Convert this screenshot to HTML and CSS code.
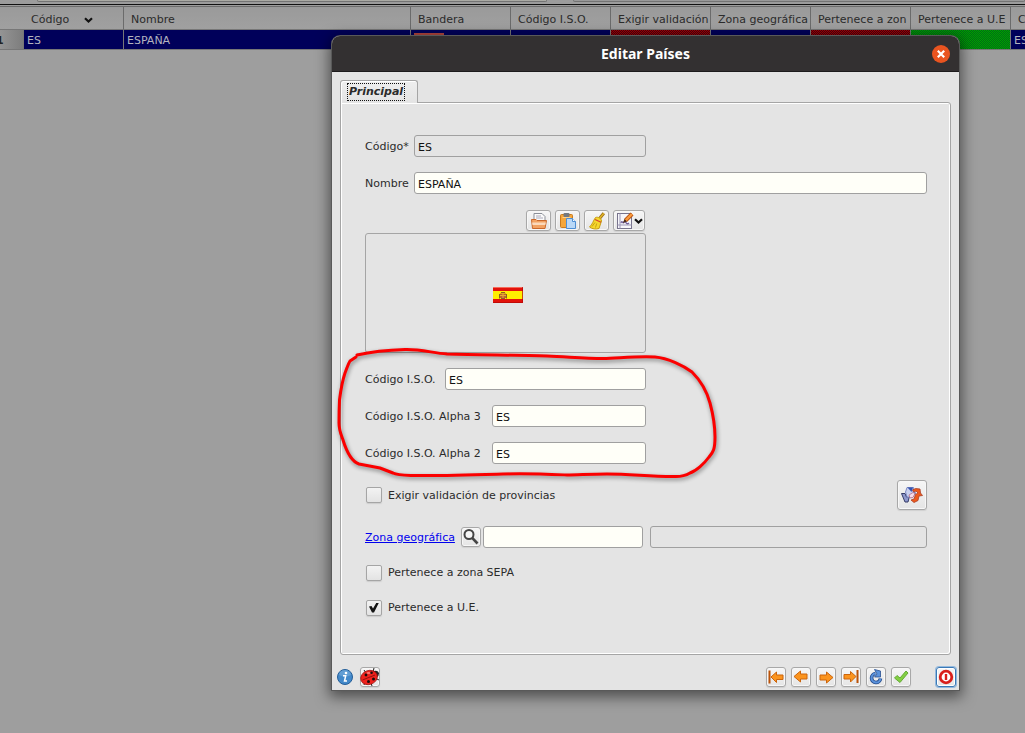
FILE: index.html
```html
<!DOCTYPE html>
<html lang="es">
<head>
<meta charset="utf-8">
<title>Editar Países</title>
<link rel="stylesheet" href="styles.css">
</head>
<body>
<main class="desktop">
  <div class="toolstrip"><span class="strip-box strip-main"></span><span class="strip-box strip-rest"></span></div>
  <table class="grid">
    <colgroup><col class="col-num"><col class="col-std"><col class="col-name"><col class="col-std"><col class="col-std"><col class="col-std"><col class="col-std"><col class="col-std"><col class="col-std"><col class="col-std"></colgroup>
    <thead>
      <tr><th></th><th>Código <svg class="sort" viewBox="0 0 9 6"><path d="M1 1.2 4.500 4.500 8 1.200" fill="none" stroke="#111" stroke-width="2.200"/></svg></th><th>Nombre</th><th>Bandera</th><th>Código I.S.O.</th><th>Exigir validación</th><th>Zona geográfica</th><th>Pertenece a zon</th><th>Pertenece a U.E</th><th>C</th></tr>
    </thead>
    <tbody>
      <tr><td class="num">1</td><td>ES</td><td>ESPAÑA</td><td><span class="mini-flag"></span></td><td></td><td class="no"></td><td></td><td class="no"></td><td class="yes"></td><td>ES</td></tr>
    </tbody>
  </table>
</main>

<section class="dialog" role="dialog" aria-labelledby="title">
  <header class="titlebar">
    <h1 id="title">Editar Países</h1>
    <button class="close" aria-label="Cerrar"><svg viewBox="0 0 18 18"><path d="M5.800 5.800 12.200 12.200M12.200 5.800 5.800 12.200" stroke="#fff" stroke-width="2.200"/></svg></button>
  </header>
  <div class="body">
    <div class="tabs" role="tablist"><button class="tab" role="tab" aria-selected="true"><span>Principal</span></button></div>
    <form class="panel">
      <div class="row half"><label class="label-short" for="codigo">Código*</label><input id="codigo" class="field ro" value="ES" readonly></div>
      <div class="row"><label class="label-short" for="nombre">Nombre</label><input id="nombre" class="field" value="ESPAÑA"></div>
      <div class="picture half">
        <div class="picture-tools">
          <button type="button" class="btn" aria-label="Abrir"><svg viewBox="0 0 18 18"><path d="M4 1.500h8l3 3V10H4z" fill="#fafafa" stroke="#8b8f98"/><path d="M6 4h5M6 6h7" stroke="#aab"/><path d="M1.500 7.500H6l1 1h9.500l-1.500 8H2.500z" fill="#f2a263" stroke="#c9682c"/><path d="M2 10.500h14l-.8 2.500H2.500z" fill="#fbd9bb"/></svg></button>
          <button type="button" class="btn" aria-label="Pegar"><svg viewBox="0 0 18 18"><rect x="1.500" y="2.500" width="12" height="13" rx="1" fill="#f5a63a" stroke="#c97b1f"/><rect x="4.500" y="1" width="6" height="4" rx="1" fill="#74797f"/><path d="M3.500 5.500h8" stroke="#ffd28c"/><path d="M7.500 6.500h6l3 3v7h-9z" fill="#b9d8f7" stroke="#4d8ed4"/><path d="M13.500 6.500v3h3" fill="#fff" stroke="#4d8ed4"/></svg></button>
          <button type="button" class="btn" aria-label="Limpiar"><svg viewBox="0 0 18 18"><path d="M15.800 1.200 11.500 6.500" stroke="#9a6c12" stroke-width="3"/><path d="M15.800 1.200 11.500 6.500" stroke="#e0b52a" stroke-width="1.400"/><path d="M7.500 5.500c2.500-1 6 1 6 3.500L11 16.500c-3 1-7 .5-9.500-1.500C4.500 12.500 5 9 7.500 5.500z" fill="#f5d72c" stroke="#c79d12"/><path d="M7 7.500l6 2.800" stroke="#d5402e" stroke-width="1.200"/><path d="M4 14.500 7 10.500M7.500 15.500l1.200-4" stroke="#c9a214"/></svg></button>
          <button type="button" class="btn wide" aria-label="Editar imagen"><svg viewBox="0 0 18 18"><rect x="1.500" y="1.500" width="14" height="15" fill="#f6f6fa" stroke="#77738c"/><path d="M4 1.500v15M1.500 13h14" stroke="#9b96b5"/><path d="M5 11c1-4 2 2 3-1s2 4 5 1" fill="none" stroke="#72619d" stroke-width="1.300"/><path d="M16 2 9.500 8.500" stroke="#b95412" stroke-width="4.200"/><path d="M16 2 9.500 8.500" stroke="#fa9a3c" stroke-width="2.400"/><path d="M8.500 7l2.500 2.500-4 1.500z" fill="#4a2c18"/></svg><svg class="sort" viewBox="0 0 9 6"><path d="M1 1.200 4.500 4.500 8 1.200" fill="none" stroke="#111" stroke-width="2.200"/></svg></button>
        </div>
        <div class="picture-box">
          <svg class="flag" viewBox="0 0 30 16" role="img" aria-label="Bandera de España"><path fill="#e3120b" d="M0 0h30v16H0z"/><path fill="#ffee00" d="M0 4h30v8H0z"/><path d="M0 .5h30" stroke="#f46a5a"/><path d="M0 15.500h30M29.500 0v16" stroke="#b40806" opacity=".7"/><path d="M7 6.500h6v4.500H7z" fill="#bd642d"/><path d="M8 5.500h4M6.500 7v4.500M13.500 7v4.500" stroke="#8c621f"/><path d="M10 6v5M7 8.500h6" stroke="#e6ac35"/><path d="M8 11.500h4" stroke="#8d5b35"/></svg>
        </div>
      </div>
      <div class="row half"><label class="label-mid" for="iso">Código I.S.O.</label><input id="iso" class="field" value="ES"></div>
      <div class="row half"><label class="label-long" for="iso3">Código I.S.O. Alpha 3</label><input id="iso3" class="field" value="ES"></div>
      <div class="row half"><label class="label-long" for="iso2">Código I.S.O. Alpha 2</label><input id="iso2" class="field" value="ES"></div>
      <div class="row spread">
        <div class="check"><input type="checkbox" id="prov"><label for="prov">Exigir validación de provincias</label></div>
        <button type="button" class="btn large" aria-label="Sincronizar"><svg viewBox="0 0 22 18"><path d="M.5 7.500H4l1.500 3.500 3-1-1.500 6H4z" fill="#8d97cd" stroke="#353c67"/><path d="M6 1.500h6.500L12 6l3 1-4 4.500L6 11 4.500 6z" fill="#c9d0f0" stroke="#6474b8" stroke-width=".8"/><path d="M6.500 1.500H12L10.500 6z" fill="#3553ae"/><path d="M11.500 4l3-1.500 4.500.500.500 4 2 2.500-3.500.5-1 4.500-4 2-3-2.500 3-1 1.500-4.500 2.500-1.500-2-2-2 1z" fill="#ed5a1c" stroke="#a93c25" stroke-width=".8"/><path d="M8 9l4-2.500 2 1-2 4-3 .5z" fill="#f6ddeb" stroke="#a54b62" stroke-width=".6"/></svg></button>
      </div>
      <div class="row zone">
        <a class="label-zone" href="#zona" id="zona-label">Zona geográfica</a>
        <button type="button" class="btn square" aria-label="Buscar"><svg viewBox="0 0 18 18"><circle cx="7" cy="6.500" r="4.500" fill="#f6f6f6" stroke="#454545" stroke-width="2"/><path d="M10.200 9.800 15.500 15.500" stroke="#454545" stroke-width="2.600"/></svg></button>
        <input class="field zone-code" aria-labelledby="zona-label"><input class="field ro zone-name" aria-label="Descripción de zona" readonly>
      </div>
      <div class="check sepa"><input type="checkbox" id="sepa"><label for="sepa">Pertenece a zona SEPA</label></div>
      <div class="check"><input type="checkbox" id="ue" checked><label for="ue">Pertenece a U.E.</label></div>
    </form>
    <footer class="actions">
      <button class="info" aria-label="Información"><svg viewBox="0 0 18 18"><circle cx="9" cy="9" r="7.500" fill="#4389ca" stroke="#245e98"/><path d="M3 7a6 5 0 0 1 12 0q-6 3-12 0" fill="#78acdb" opacity=".6"/><circle cx="10" cy="5" r="1.300" fill="#fff"/><path d="M7 7.800h2.700L8.500 13H11" fill="none" stroke="#fff" stroke-width="1.500"/></svg></button>
      <button class="btn square bug" aria-label="Depurar"><svg viewBox="0 0 20 20"><path d="M4 3l2 3M14 1l-1 4M19 6l-3 2M19 13l-4-2M12 19l-1-3M4 18l1-3" stroke="#222"/><circle cx="15.500" cy="7" r="3.300" fill="#252525"/><ellipse cx="9" cy="10.500" rx="8.500" ry="7" transform="rotate(-20 9 10.500)" fill="#ee221d" stroke="#9c1110" stroke-width=".7"/><path d="M2.500 13 15 8" stroke="#7a0d0b" stroke-width=".8"/><g fill="#1c0d0d"><circle cx="6" cy="8" r="1.400"/><circle cx="11.500" cy="5.800" r="1.300"/><circle cx="8.500" cy="14.500" r="1.500"/><circle cx="13.500" cy="12" r="1.500"/></g><ellipse cx="8.500" cy="6" rx="2" ry="1" fill="#ff9c95" opacity=".7"/></svg></button>
      <span class="grow"></span>
      <button class="btn square" aria-label="Primero"><svg viewBox="0 0 18 18"><path d="M2.500 2.500v13" stroke="#bb5208" stroke-width="2"/><path d="M4 9l5.500-5v3H16v4.500H9.500v3z" fill="#fb941e" stroke="#cc650c"/></svg></button>
      <button class="btn square" aria-label="Anterior"><svg viewBox="0 0 18 18"><path d="M2 8.500 8.500 3v3H15v5H8.500v3z" fill="#fb941e" stroke="#cc650c"/></svg></button>
      <button class="btn square" aria-label="Siguiente"><svg viewBox="0 0 18 18"><path d="M16 9.500 9.500 4v3H3v5h6.500v3z" fill="#fb941e" stroke="#cc650c"/></svg></button>
      <button class="btn square" aria-label="Último"><svg viewBox="0 0 18 18"><path d="M15.500 2v13" stroke="#bb5208" stroke-width="2"/><path d="M14 8.500 8.500 3.500v3H2V11h6.500v3z" fill="#fb941e" stroke="#cc650c"/></svg></button>
      <button class="btn square" aria-label="Actualizar"><svg viewBox="0 0 18 18"><path d="M8.500 5.500a4.500 4.500 0 1 0 5 5" fill="none" stroke="#284f8f" stroke-width="3.600"/><path d="M8.500 5.500a4.500 4.500 0 1 0 5 5" fill="none" stroke="#5a92dc" stroke-width="2"/><path d="M7.500 1.500 13.500 3v6H7.500l2.500-3z" fill="#5a92dc" stroke="#284f8f" stroke-width=".8"/></svg></button>
      <button class="btn square" aria-label="Aceptar"><svg viewBox="0 0 18 18"><path d="M2.500 10 5 7.500l3 2.500 6-7 2 2-8 9.500z" fill="#83cf43" stroke="#64ab35"/></svg></button>
      <button class="btn square quit" aria-label="Cancelar"><svg viewBox="0 0 18 18"><circle cx="9" cy="9" r="5.800" fill="#fff" stroke="#d91f1c" stroke-width="2.800"/><path d="M9 6v6" stroke="#d91f1c" stroke-width="2.400"/></svg></button>
    </footer>
  </div>
  <svg class="annotation" viewBox="336 344 384 138" aria-hidden="true"><path d="M357 355C370 352 388 350 405 349.500C420 349 433 353 447 354C480 355 520 355 547 356C570 357 585 358.500 603 358.500C620 358 638 356 655 357C668 358 684 366 692 372C702 382 707 392 710 403C714 418 715 428 715 437C715 450 713 452 709 457C704 464 696 471 690 473C685 476 680 477 673 476.500C645 476 630 474 607 474C590 474 578 475 567 475C545 474 525 473 503 474C470 475 440 476 413 475.500C400 475 397 475 393 473L380 468L359 464C353 462 347 453 343 440C340 432 339 430 339 423C339 412 339 410 339.500 400C341 388 342 382 345 373C347 368 348 364 350 361L356 357" fill="none" stroke="#fb0000" stroke-width="3" stroke-linecap="round" stroke-linejoin="round"/></svg>
</section>
</body>
</html>
```

FILE: styles.css
```css
* { box-sizing: border-box; }
body {
  margin: 0;
  min-height: 100vh;
  overflow: hidden;
  background: #9e9e9e;
  color: #2b2b2b;
  font: 11px/16px "DejaVu Sans", sans-serif;
}
button, input { font: inherit; color: inherit; margin: 0; }
button { padding: 0; border: 0; background: none; }
svg { display: block; flex: none; }

.desktop { overflow: hidden; min-height: 100vh; }
.toolstrip {
  display: flex;
  gap: 26px;
  height: 7px;
  padding-left: 37px;
  background: linear-gradient(#9c9c9c 4px, #111 4px, #111 5px, #9c9c9c 5px, #9c9c9c 6px, #6c6c6c 6px);
}
.strip-box { height: 2px; border: solid #737373; border-width: 0 1px 1px; border-radius: 0 0 3px 3px; background: #aaaaa4; }
.strip-main { flex: 0 0 510px; }
.strip-rest { flex: 1; background: #999; }

.grid { width: 1111px; table-layout: fixed; border-collapse: separate; border-spacing: 0; }
.col-num { width: 24px; }
.col-std { width: 100px; }
.col-name { width: 287px; }
.grid th, .grid td { overflow: hidden; white-space: nowrap; text-align: left; }
.grid th {
  height: 23px;
  padding: 3px 0 0 7px;
  font-weight: 400;
  border-right: 1px solid #6b6b6b;
  border-bottom: 1px solid #777;
  background: linear-gradient(#9a9a9a, #a0a0a0);
}
.grid th:first-child { border-right: 0; }
.grid th .sort { display: inline-block; margin-left: 11px; }
.grid td {
  height: 20px;
  padding: 2px 0 0 3px;
  color: #b4b4bf;
  background: #00005a;
  border-right: 1px solid #777;
  border-bottom: 1px solid #777;
}
.grid .num { color: #222; font-weight: 700; padding-left: 0; text-indent: -4px; background: linear-gradient(90deg, #949494, #7d7d7d); }
.grid .no { background: repeating-conic-gradient(#a50000 0 25%, #4a0010 0 50%) 0 0 / 2px 2px; }
.grid .yes { background: repeating-conic-gradient(#00a000 0 25%, #006c16 0 50%) 0 0 / 2px 2px; }
.mini-flag { display: block; height: 16px; width: 30px; background: linear-gradient(#b5463e 2px, #940900 2px, #940900 4px, #a69b00 4px, #a69b00 12px, #940900 12px); }
.sort { width: 9px; height: 6px; }

.dialog {
  position: absolute;
  top: 36px;
  left: 332px;
  right: 66px;
  background: #e4e4e4;
  border-radius: 8px 8px 0 0;
  box-shadow: 0 0 0 1px #595959, 0 4px 14px 3px rgba(0, 0, 0, .5);
}
.titlebar {
  display: grid;
  grid-template-columns: 1fr auto 1fr;
  align-items: center;
  height: 36px;
  padding: 0 9px;
  border-bottom: 1px solid #1d1b1c;
  border-radius: 8px 8px 0 0;
  background: #333031;
  color: #fff;
}
.titlebar h1 { grid-column: 2; margin: 0; font: 700 14px/20px "Noto Sans", "Open Sans", sans-serif; }
.close { justify-self: end; width: 18px; height: 18px; border-radius: 50%; background: #e95420; }

.body { padding: 8px 8px 3px; }
.tabs { display: flex; }
.tab {
  position: relative;
  z-index: 1;
  height: 23px;
  width: 78px;
  margin-bottom: -1px;
  padding: 0 7px;
  text-align: left;
  border: 1px solid #a5a5a5;
  border-bottom: 0;
  border-radius: 3px 3px 0 0;
  background: linear-gradient(#eee, #e4e4e4);
  box-shadow: inset 1px 1px #fff;
  font-weight: 700;
  font-style: italic;
}
.tab span { display: inline-block; padding: 0 1px; outline: 1px dotted #111; }
.panel {
  display: flex;
  flex-direction: column;
  gap: 15px;
  padding: 32px 23px 38px 24px;
  border: 1px solid #a5a5a5;
  border-radius: 0 3px 3px 3px;
  box-shadow: inset 1px 1px #fff, inset -1px -1px #fff;
}
.row { display: flex; align-items: center; gap: 4px; }
.row label, .check label, .row a { padding-top: 1px; white-space: nowrap; }
.label-short { flex: none; width: 45px; }
.label-mid { flex: none; width: 76px; }
.label-long { flex: none; width: 123px; }
.label-zone { flex: none; width: 92px; }
.half { width: 50%; }
.field {
  flex: 1;
  min-width: 0;
  height: 22px;
  padding: 2px 3px 0;
  border: 1px solid #a0a0a0;
  border-radius: 3px;
  background: #fffff8;
  color: #111;
}
.field.ro { background: #e4e4e4; }
.btn {
  display: flex;
  align-items: center;
  justify-content: center;
  flex: none;
  width: 25px;
  height: 21px;
  border: 1px solid #a8a8a8;
  border-radius: 3px;
  background: linear-gradient(#f6f6f6, #e5e5e5);
  box-shadow: inset 0 0 0 1px #f7f7f7, 0 1px 1px #d0d0d0;
}
.btn svg { width: 18px; height: 18px; }
.btn.wide { width: 32px; }
.btn .sort { width: 9px; height: 6px; }
.btn.square { width: 20px; height: 20px; }
.btn.bug svg { width: 20px; height: 20px; }
.btn.large { width: 30px; height: 30px; }
.btn.large svg { width: 22px; }
.picture { display: flex; flex-direction: column; gap: 2px; padding-top: 1px; }
.picture-tools { display: flex; justify-content: flex-end; gap: 4px; padding-right: 1px; }
.picture-box {
  display: flex;
  align-items: center;
  justify-content: center;
  height: 120px;
  padding: 4px 0 0 4px;
  border: 1px solid #a5a5a5;
  border-radius: 3px;
}
.flag { width: 30px; height: 16px; }
.spread { justify-content: space-between; margin: 1px 0; }
.check { display: flex; align-items: center; gap: 6px; padding-left: 1px; }
.check input {
  appearance: none;
  width: 16px;
  height: 16px;
  border: 1px solid #a5a5a5;
  border-radius: 2px;
  background: linear-gradient(#f3f3f3, #e3e3e3);
  box-shadow: 0 1px 1px #ccc;
}
.check input:checked::before {
  content: "";
  display: block;
  width: 10px;
  height: 10px;
  margin: 2px;
  background: #151515;
  clip-path: polygon(0 40%, 25% 35%, 40% 60%, 75% 0, 100% 0, 50% 100%, 30% 100%);
}
.row a { color: #0000ee; }
.zone .square { margin-right: -2px; }
.zone .zone-code { flex: 0 0 160px; margin-right: 3px; }
.sepa { margin: 1px 0 3px; }

.actions { display: flex; align-items: center; gap: 5px; padding-top: 12px; }
.actions .grow { flex: 1; }
.info { width: 18px; height: 18px; margin: 0 1px 0 -4px; }
.actions .quit { margin: 0 -5px 0 20px; border-color: #3a79b7; box-shadow: inset 0 0 0 1px #fff, 0 0 0 1px #94b9dd; }

.annotation {
  position: absolute;
  top: 308px;
  left: 4px;
  width: 384px;
  height: 138px;
  pointer-events: none;
  filter: drop-shadow(1px 2px 2px rgba(0, 0, 0, .45));
}
```
